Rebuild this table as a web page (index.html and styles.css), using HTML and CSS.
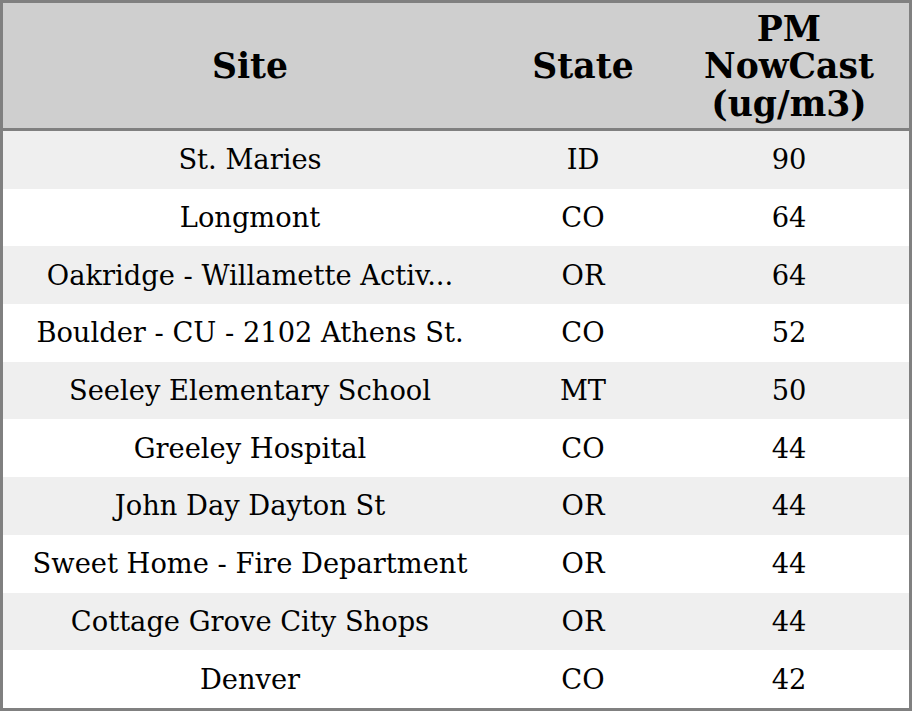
FILE: index.html
```html
<!DOCTYPE html>
<html>
<head>
<meta charset="utf-8">
<link rel="stylesheet" href="styles.css">
</head>
<body>
<table class="pm">
  <colgroup>
    <col class="c-site">
    <col class="c-state">
    <col class="c-pm">
  </colgroup>
  <thead>
    <tr>
      <th>Site</th>
      <th>State</th>
      <th>PM<br>NowCast<br>(ug/m3)</th>
    </tr>
  </thead>
  <tbody>
    <tr><td>St. Maries</td><td>ID</td><td>90</td></tr>
    <tr><td>Longmont</td><td>CO</td><td>64</td></tr>
    <tr><td>Oakridge - Willamette Activ...</td><td>OR</td><td>64</td></tr>
    <tr><td>Boulder - CU - 2102 Athens St.</td><td>CO</td><td>52</td></tr>
    <tr><td>Seeley Elementary School</td><td>MT</td><td>50</td></tr>
    <tr><td>Greeley Hospital</td><td>CO</td><td>44</td></tr>
    <tr><td>John Day Dayton St</td><td>OR</td><td>44</td></tr>
    <tr><td>Sweet Home - Fire Department</td><td>OR</td><td>44</td></tr>
    <tr><td>Cottage Grove City Shops</td><td>OR</td><td>44</td></tr>
    <tr><td>Denver</td><td>CO</td><td>42</td></tr>
  </tbody>
</table>
</body>
</html>
```
FILE: styles.css
```css
html, body {
  margin: 0;
  padding: 0;
  background: #ffffff;
}
.pm {
  width: 912px;
  height: 711px;
  border: 3px solid #808080;
  border-spacing: 0;
  table-layout: fixed;
  font-family: "DejaVu Serif", serif;
  color: #000;
  box-sizing: border-box;
}
.c-site { width: 494px; }
.c-state { width: 172px; }
.c-pm { width: 240px; }
.pm th {
  height: 122px;
  padding: 3px 0 0;
  background: #cfcfcf;
  border-bottom: 3px solid #808080;
  font-size: 34.6px;
  font-weight: bold;
  line-height: 37.5px;
  text-align: center;
  vertical-align: middle;
}
.pm td {
  height: 56.7px;
  padding: 1px 0 0;
  font-size: 27.3px;
  line-height: 30px;
  text-align: center;
  vertical-align: middle;
  white-space: nowrap;
}
.pm tbody tr:nth-child(odd) td {
  background: #efefef;
}
```
